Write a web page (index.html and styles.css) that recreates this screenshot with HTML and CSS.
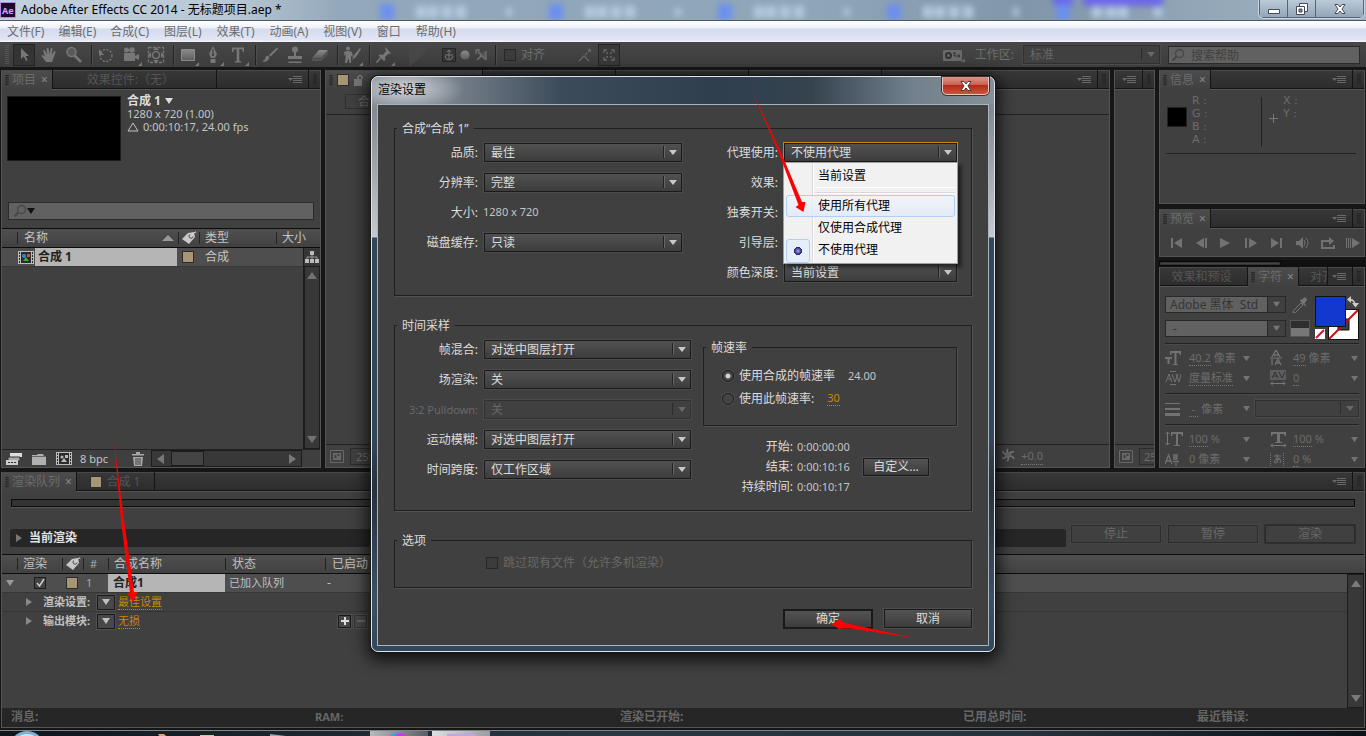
FILE: index.html
```html
<!DOCTYPE html>
<html lang="zh-CN">
<head>
<meta charset="utf-8">
<title>Adobe After Effects CC 2014 - 无标题项目.aep *</title>
<link rel="stylesheet" href="styles.css">
</head>
<body>
<svg class="defs" aria-hidden="true">
  <defs>
    <linearGradient id="metal" x1="0" y1="0" x2="0" y2="1"><stop offset="0" stop-color="#8c8c8c"/><stop offset="1" stop-color="#5c5c5c"/></linearGradient>
    <symbol id="flyout" viewBox="0 0 14 10"><path d="M0 3h5L2.500 6z" fill="#686868"/><path d="M5 1.500h9M5 3.500h9M5 5.500h9M5 7.500h9" stroke="#686868"/></symbol>
    <symbol id="grip" viewBox="0 0 4 12"><path d="M0 .5h4M0 2.500h4M0 4.500h4M0 6.500h4M0 8.500h4M0 10.500h4" stroke="#222"/></symbol>
    <symbol id="tag" viewBox="0 0 16 14"><path d="M1 8L7 2l6-1 1 5-6 7z" fill="#c8c8c8"/><path d="M9 3.500a2 2 0 1 0 3 2" fill="none" stroke="#444"/><path d="M11 4l3-3.200 1.300.8" fill="none" stroke="#ddd"/></symbol>
    <symbol id="film" viewBox="0 0 16 13"><path d="M0 0h16v13H0z" fill="#bdbdbd"/><path d="M3 1h10v11H3z" fill="#2b2b2b"/><path d="M1 1h1v2H1zm0 3h1v2H1zm0 3h1v2H1zm0 3h1v2H1zM14 1h1v2h-1zm0 3h1v2h-1zm0 3h1v2h-1zm0 3h1v2h-1z" fill="#2b2b2b"/></symbol>
    <symbol id="lens" viewBox="0 0 14 14"><circle cx="8.500" cy="5.500" r="4" fill="none" stroke="#474747" stroke-width="1.300"/><path d="M5.500 8.500L1.500 12.500" stroke="#474747" stroke-width="2"/></symbol>
    <symbol id="region" viewBox="0 0 14 13"><path d="M.5.500h13v12H.5z" fill="none" stroke="#686868"/><path d="M3 3h8v7H3z" fill="#686868"/><path d="M4.500 5h2v3h-2zm3-1h2v2h-2z" fill="#404040"/></symbol>
    <symbol id="down" viewBox="0 0 8 6"><path d="M0 0h8L4 6z" fill="currentColor"/></symbol>
  </defs>
</svg>

<header class="titlebar">
  <svg class="ae" viewBox="0 0 16 16"><rect x=".5" y=".5" width="15" height="15" fill="#1d0a33" stroke="#b48ae0"/><text x="2" y="12" font-size="9" fill="#cf9dff">Ae</text></svg>
  <h1>Adobe After Effects CC 2014 - 无标题项目.aep *</h1>
  <div class="behind"><i></i><i></i><i></i><i></i><i class="last"></i></div>
  <div class="winbtns">
    <button aria-label="最小化"><svg width="12" height="12"><path d="M.5 6.500h11v4H.5z" fill="#fff" stroke="#444a58"/></svg></button>
    <button aria-label="还原"><svg width="12" height="12"><path d="M3.500.500h8v8h-8z" fill="#fff" stroke="#444a58"/><path d="M.5 3.500h8v8h-8z" fill="#fff" stroke="#444a58"/><path d="M3 6h3v3H3z" fill="#7888a0" stroke="#444a58"/></svg></button>
    <button class="wide" aria-label="关闭"><svg width="12" height="12"><path d="M1 1.500h3l2 2.500 2-2.500h3L8 6l3 4.500H8L6 8l-2 2.500H1L4 6z" fill="#fff" stroke="#444a58"/></svg></button>
  </div>
</header>

<nav class="menubar">
  <a href="#">文件(F)</a><a href="#">编辑(E)</a><a href="#">合成(C)</a><a href="#">图层(L)</a><a href="#">效果(T)</a><a href="#">动画(A)</a><a href="#">视图(V)</a><a href="#">窗口</a><a href="#">帮助(H)</a>
</nav>

<div class="toolbar">
  <svg class="grip" width="4" height="20"><path d="M2 0v20" stroke="#555" stroke-width="4" stroke-dasharray="1 1"/></svg>
  <button class="tool on" aria-label="选取"><svg viewBox="0 0 18 18"><path d="M6 2v11l2.800-2.500L11 15l1.700-.8L10.600 10H14z"/></svg></button>
  <button class="tool" aria-label="手形"><svg viewBox="0 0 18 18"><path d="M6 16L1.500 10q0-1.500 1.700-.8L5 11 3.200 4.500q.4-1.400 1.600-.5L6.800 8.500 6.600 2.500q1-1.400 2 0L9.400 8l1.300-5.500q1.200-1 1.900.3L11.900 9l2.300-4q1.400-.4 1.400.8L13.500 12l-1.500 4z"/></svg></button>
  <button class="tool" aria-label="缩放"><svg viewBox="0 0 18 18"><circle cx="6.500" cy="6" r="4.500" fill="#5a5a5a" stroke="#777" stroke-width="1.500"/><path d="M9.500 9.500L16 16" stroke="#777" stroke-width="2.500"/></svg></button>
  <i class="sep"></i>
  <button class="tool" aria-label="旋转"><svg viewBox="0 0 18 18"><circle cx="9" cy="9.500" r="6" fill="none" stroke="#777" stroke-width="1.300" stroke-dasharray="2 1.500"/><path d="M2 3v6h5z"/></svg></button>
  <button class="tool more" aria-label="摄像机"><svg viewBox="0 0 18 18"><circle cx="4.500" cy="4" r="2.500"/><circle cx="10" cy="4" r="2.800"/><path d="M2 7h11v8H2zM13 10l4-2v6l-4-2z"/></svg></button>
  <button class="tool" aria-label="向后平移"><svg viewBox="0 0 18 18"><path d="M1.500 1.500h15v15h-15z" fill="none" stroke="#777" stroke-width="1.300" stroke-dasharray="3 1.500"/><circle cx="9" cy="9" r="3.500" fill="none" stroke="#777" stroke-width="1.500"/><path d="M9 1l3 3H6zM9 17l3-3H6zM1 9l3-3v6zM17 9l-3-3v6z"/></svg></button>
  <i class="sep"></i>
  <button class="tool more" aria-label="矩形"><svg viewBox="0 0 18 18"><path d="M2.500 3.500h13v11h-13z" fill="url(#metal)" stroke="#8a8a8a"/></svg></button>
  <button class="tool more" aria-label="钢笔"><svg viewBox="0 0 18 18"><path d="M9 0L5 8l2 4h4l2-4zM6.500 13h5v4h-5z"/><path d="M9 3v6" stroke="#333"/><circle cx="9" cy="9" r="1" fill="#333"/></svg></button>
  <button class="tool more" aria-label="文字"><svg viewBox="0 0 18 18"><path d="M3 1.500h12V6h-1.200L13 3.200H10.300V15l2 .5v1H5.700v-1l2-.5V3.200H5L4.200 6H3z"/></svg></button>
  <i class="sep"></i>
  <button class="tool" aria-label="画笔"><svg viewBox="0 0 18 18"><path d="M16 1.500L8 9l1.500 1.500L17 3z"/><path d="M7 9.500q-3 .5-3 4l-3 2q6 1 7.500-4z"/></svg></button>
  <button class="tool" aria-label="仿制图章"><svg viewBox="0 0 18 18"><circle cx="9" cy="3.500" r="3"/><path d="M8 6h2v4h6v3H2v-3h6z"/><path d="M2.500 15.500h13v1.500h-13z"/></svg></button>
  <button class="tool" aria-label="橡皮擦"><svg viewBox="0 0 18 18"><path d="M8 4h9l-7 8H1z" fill="url(#metal)"/><path d="M1 12.500h9l7-8V8l-7 7H1z" fill="#555"/></svg></button>
  <i class="sep"></i>
  <button class="tool more" aria-label="Roto 笔刷"><svg viewBox="0 0 18 18"><circle cx="5" cy="2.500" r="2"/><path d="M1 6q4-2 8 0l1 5-2-1v7H6.500l-1-5-1.500 5H2l1-9-1.500 2z"/><path d="M17 2l-6 7-2 5 4-3 5-8z"/></svg></button>
  <i class="sep"></i>
  <button class="tool more" aria-label="操控点"><svg viewBox="0 0 18 18"><path d="M10 1l6 6-1.500 1-1-.3L10 11l.3 3L9 15 3.500 9.500 5 8.500l3 .3L11 5l-.8-2.500z"/><path d="M6 11.500L1.500 16.500" stroke="#777" stroke-width="1.500"/></svg></button>
  <svg class="slope" viewBox="0 0 38 25" preserveAspectRatio="none"><path d="M0 25Q10 18 18 8 24 0 34 0H0z" fill="#474747"/></svg>
  <div class="axis">
    <svg width="14" height="14"><path d="M.5.500h13v13H.5z" fill="#363636" stroke="#252525"/><path d="M7 2v9M3 8q1 4 4 4t4-4M5 4l2-2 2 2M3 7h8" fill="none" stroke="#777"/></svg>
    <svg width="12" height="14"><circle cx="6" cy="7" r="4.500" fill="url(#metal)"/></svg>
    <svg width="14" height="14"><path d="M2 2h3l3 3 4-2v9l-4-3-5 3 3-5z" fill="#555"/><path d="M2 6V2h4M12 12L4 4M12 3v9M3 12l4-4" fill="none" stroke="#707070" stroke-width="1.300"/></svg>
  </div>
  <i class="sep"></i>
  <label class="snap"><input type="checkbox" disabled>对齐</label>
  <svg class="snapico" width="14" height="14"><path d="M1 13l5-5 5 5M7 7l2-2M10 4l1-1" fill="none" stroke="#666" stroke-width="1.300"/><path d="M9 1h4v4z" fill="#666"/></svg>
  <button class="tool boxed" aria-label="捕捉"><svg viewBox="0 0 18 18"><path d="M4 7V4h3M11 4h3v3M14 11v3h-3M7 14H4v-3M7 8V7h1M10 7h1v1M11 10v1h-1M8 11H7v-1" fill="none" stroke="#686868" stroke-width="1.300"/></svg></button>
  <div class="wsp">
    <svg width="22" height="14"><rect y="2" width="19" height="11" rx="1" fill="#6a6a6a"/><circle cx="5.500" cy="7.500" r="2.500" fill="none" stroke="#333" stroke-width="2"/><path d="M11 4v4h6M13 6l-2-2M15 6l2 2-2 2" fill="none" stroke="#333"/><path d="M22 10v4h-4z" fill="#666"/></svg>
    <label for="workspace">工作区:</label>
    <select id="workspace" class="dd off" disabled><option>标准</option></select>
    <div class="help"><svg width="14" height="14"><use href="#lens"/></svg><input type="text" aria-label="搜索帮助" placeholder="搜索帮助"></div>
  </div>
</div>

<main class="workspace">
  <section class="panel project">
    <div class="tabs">
      <div class="tab on"><svg class="grip"><use href="#grip"/></svg>项目<b>×</b></div>
      <div class="tab fx">效果控件:（无）</div>
      <div class="fill"><svg width="14" height="10"><use href="#flyout"/></svg></div>
      <div class="end"><svg class="grip"><use href="#grip"/></svg></div>
    </div>
    <div class="clip">
      <div class="thumb"></div>
      <div><strong>合成 1 <svg width="8" height="6"><use href="#down"/></svg></strong><p>1280 x 720 (1.00)</p><p><svg width="12" height="10"><path d="M6 1L1 9h10z" fill="none" stroke="#c4c4c4"/></svg> 0:00:10:17, 24.00 fps</p></div>
    </div>
    <div class="search"><svg width="14" height="14"><use href="#lens"/></svg><svg class="blk" width="8" height="6"><use href="#down"/></svg><input type="text" aria-label="搜索项目"></div>
    <div class="phead">
      <span class="c1"></span><span class="c2">名称<svg width="12" height="6"><path d="M0 6l6-6 6 6z" fill="#999"/></svg></span><span class="c3"><svg width="16" height="14"><use href="#tag"/></svg></span><span class="c4">类型</span><span class="c5">大小</span>
    </div>
    <div class="plist">
      <div class="rows">
        <div class="prow"><span class="c1"><svg width="16" height="13"><use href="#film"/><circle cx="6" cy="5" r="2" fill="#2a8fd0"/><path d="M9 3h3v3H9z" fill="#d4502a"/><path d="M5 10l3-4 3 4z" fill="#3cae3c"/></svg></span><span class="c2 pick">合成 1</span><span class="c3"><i class="sw"></i></span><span class="c4">合成</span></div>
      </div>
      <div class="pscroll">
        <svg class="flow" width="14" height="14"><path d="M5 1h4v4H5zM0 9h4v4H0zM5 9h4v4H5zM10 9h4v4h-4z" fill="#bbb"/><path d="M7 5v4M2 9V7h10v2" fill="none" stroke="#999"/></svg>
        <div class="vbar"><svg width="10" height="7"><path d="M0 7l5-7 5 7z" fill="#727272"/></svg><svg width="10" height="7"><path d="M0 0h10L5 7z" fill="#727272"/></svg></div>
      </div>
    </div>
    <div class="pfoot">
      <svg width="16" height="14"><path d="M4 1h12v4H4z" fill="#ddd"/><path d="M2 5h12v4H2z" fill="#aaa" stroke="#333"/><path d="M0 8h12v5H0z" fill="#ccc"/><path d="M2 10.500h2M5 10.500h2M8 10.500h2" stroke="#333"/></svg>
      <svg width="14" height="14"><path d="M0 3h5l1-1h5l1 2h2v9H0z" fill="#b0b0b0"/><path d="M0 4.500h14" stroke="#666"/></svg>
      <svg width="16" height="13"><use href="#film"/><circle cx="6" cy="5" r="1.500" fill="#bbb"/><path d="M9 3h3v3H9zM5 10l3-4 3 4z" fill="#bbb"/></svg>
      <span>8 bpc</span>
      <svg width="12" height="14"><path d="M0 2h12v1.500H0zM4 0h4v2H4zM1 5h10l-1 9H2z" fill="#a8a8a8"/><path d="M4 6v7M6 6v7M8 6v7" stroke="#444"/></svg>
      <div class="hbar"><svg width="7" height="10"><path d="M7 0v10L0 5z" fill="#777"/></svg><i></i><svg width="7" height="10"><path d="M0 0v10l7-5z" fill="#777"/></svg></div>
    </div>
  </section>

  <section class="panel comp">
    <div class="tabs">
      <div class="tab on lead"><svg class="grip"><use href="#grip"/></svg><i class="sw"></i><svg width="10" height="12"><path d="M1 5h8v7H1z" fill="#777"/><path d="M5 5V3q2-3 4 0v2" fill="none" stroke="#777" stroke-width="1.500"/></svg></div>
      <div class="tab"></div><div class="tab"></div><div class="tab"></div>
      <div class="fill"><svg width="14" height="10"><use href="#flyout"/></svg></div>
      <div class="end"><svg class="grip"><use href="#grip"/></svg></div>
    </div>
    <div class="crumb"><button>合成 1</button></div>
    <div class="stage"></div>
    <div class="vfoot"><svg width="14" height="13"><use href="#region"/></svg><span class="zoom">25%</span><span class="expo"><svg width="14" height="14"><circle cx="7" cy="7" r="3" fill="#666"/><path d="M7 1q-2 2 0 4M13 4q-3-1-4 2M13 11q-1-3-4-3M6 13q2-1 1-4M1 10q3 1 4-2M2 3q0 3 3 3" fill="none" stroke="#777" stroke-width="1.500"/></svg><u>+0.0</u></span></div>
  </section>

  <section class="panel side">
    <div class="tabs"><div class="fill"><svg width="14" height="10"><use href="#flyout"/></svg></div><div class="end"><svg class="grip"><use href="#grip"/></svg></div></div>
    <div class="stage"></div>
    <div class="vfoot"><svg width="14" height="13"><use href="#region"/></svg><span class="zoom">25</span></div>
  </section>

  <div class="right">
    <section class="panel info">
      <div class="tabs">
        <div class="tab on"><svg class="grip"><use href="#grip"/></svg>信息<b>×</b></div>
        <div class="fill"><svg width="14" height="10"><use href="#flyout"/></svg></div>
        <div class="end"><svg class="grip"><use href="#grip"/></svg></div>
      </div>
      <div class="ibody">
        <i class="blackbox"></i>
        <dl><dt>R :</dt><dt>G :</dt><dt>B :</dt><dt>A :</dt></dl>
        <i class="vline"></i><svg width="9" height="9"><path d="M4.500 0v9M0 4.500h9" stroke="#777"/></svg>
        <dl><dt>X :</dt><dt>Y :</dt></dl>
      </div>
    </section>
    <section class="panel preview">
      <div class="tabs">
        <div class="tab on"><svg class="grip"><use href="#grip"/></svg>预览<b>×</b></div>
        <div class="fill"><svg width="14" height="10"><use href="#flyout"/></svg></div>
        <div class="end"><svg class="grip"><use href="#grip"/></svg></div>
      </div>
      <div class="play">
        <button aria-label="第一帧"><svg width="14" height="12"><path d="M1 1h2v10H1zM12 1v10L4 6z"/></svg></button>
        <button aria-label="上一帧"><svg width="14" height="12"><path d="M9 1v10L1 6zM10 1h2v10h-2z"/></svg></button>
        <button aria-label="播放"><svg width="14" height="12"><path d="M0 1v10l10-5z"/></svg></button>
        <button aria-label="下一帧"><svg width="14" height="12"><path d="M0 1h2v10H0zM4 1v10l8-5z"/></svg></button>
        <button aria-label="最后一帧"><svg width="14" height="12"><path d="M0 1v10l8-5zM9 1h2v10H9z"/></svg></button>
        <button aria-label="静音"><svg width="14" height="12"><path d="M0 4h3l4-4v12L3 8H0z"/><path d="M8 3q2 3 0 6M10 1q4 5 0 10" fill="none" stroke="#727272"/></svg></button>
        <button aria-label="循环"><svg width="14" height="12"><path d="M0 3h8V0l5 4-5 4V5H2v5h10V8h2v4H0z"/></svg></button>
        <button aria-label="RAM 预览"><svg width="14" height="12"><path d="M0 1h1v10H0zM2 1h1v10H2zM4 1h1v10H4zM6 1v10l8-5z"/></svg></button>
      </div>
    </section>
    <div class="strip"><i></i></div>
    <section class="panel chars">
      <div class="tabs">
        <div class="tab">效果和预设</div>
        <div class="tab on"><svg class="grip"><use href="#grip"/></svg>字符<b>×</b></div>
        <div class="tab cut">对齐</div>
        <div class="fill"><svg width="14" height="10"><use href="#flyout"/></svg></div>
        <div class="end"><svg class="grip"><use href="#grip"/></svg></div>
      </div>
      <div class="cbody">
        <div class="fontrow">
          <div class="fonts">
            <select class="font" aria-label="字体"><option>Adobe 黑体&nbsp; Std</option></select>
            <select class="font" aria-label="字体样式"><option>&nbsp;-</option></select>
          </div>
          <div class="picks">
            <svg width="16" height="18"><path d="M1 17q0-3 2-4l6-6 2 2-6 6q-1 2-4 2z" fill="none" stroke="#777"/><path d="M8 5l5 5 1-1-1.500-1.500L15 4q0-3-3-2.500L10 4 9 3z" fill="#777"/></svg>
            <i class="bw"></i>
          </div>
          <svg class="paint" width="44" height="44"><path d="M13 13h31v31H13z" fill="#111"/><path d="M14 14h29v29H14z" fill="#fff"/><path d="M23 23h11v11H23z" fill="#404040" stroke="#111"/><path d="M14 43L43 14" stroke="#c80e0e" stroke-width="2"/><path d="M0 0h31v31H0z" fill="#111"/><path d="M1 1h29v29H1z" fill="#1238d0"/><path d="M0 33h10v10H0z" fill="#fff"/><path d="M1 42l8-8" stroke="#d01030" stroke-width="2"/><path d="M34 4q6-1 6 6" fill="none" stroke="#ccc" stroke-width="1.500"/><path d="M36 0v7l-4-3.500zM37 7h7l-3.500 4.500z" fill="#ccc"/></svg>
        </div>
        <hr>
        <div class="crow">
          <svg width="16" height="16"><path d="M5 1h11v4h-1l-1-2h-2.500v11h1.500v1h-5v-1h1.500V3H7L6 5H5zM0 7h7v2H4.500v5H2.500V9H0z"/></svg><span><u>40.2</u> 像素</span><svg class="arr" width="7" height="7"><use href="#down"/></svg>
          <svg width="12" height="16"><path d="M2 7l4-7 4 7M4 5h4M2 9v6M5 15l3-6 3 6M6 13h4" fill="none" stroke="#727272" stroke-width="1.300"/><path d="M0 8h12" stroke="#727272"/></svg><span><u>49</u> 像素</span><svg class="arr" width="7" height="7"><use href="#down"/></svg>
        </div>
        <div class="crow">
          <svg width="16" height="16"><path d="M1 12l3-8 3 8M3 9h3M7 4l3 8 3-8M11 4l3 8 2-8M5 1.500h6M5 14.500h6" fill="none" stroke="#727272"/></svg><span><u>度量标准</u></span><svg class="arr" width="7" height="7"><use href="#down"/></svg>
          <svg width="16" height="16"><path d="M0 0h16v10H0z" fill="#5c5c5c"/><path d="M2 8l3-6 3 6M3 6h4M9 2l3 6 3-6" fill="none" stroke="#333"/><path d="M1 13.500h14M3 11.500l-2 2 2 2M13 11.500l2 2-2 2" fill="none" stroke="#777"/></svg><span><u>0</u></span><svg class="arr" width="7" height="7"><use href="#down"/></svg>
        </div>
        <hr>
        <div class="crow tall">
          <svg width="15" height="14"><path d="M0 1h15v1H0zM0 6h15v2H0zM0 11h15v3H0z"/></svg><span><u>&nbsp;-&nbsp;</u> 像素</span><svg class="arr" width="7" height="7"><use href="#down"/></svg>
          <select class="dd off" aria-label="描边方式" disabled><option></option></select>
        </div>
        <hr>
        <div class="crow">
          <svg width="18" height="16"><path d="M6 1h12v4h-1l-1-2h-3v11h2v1H9v-1h2V3H8L7 5H6z"/><path d="M2.500 1v13M.5 3l2-2 2 2M.5 12l2 2 2-2" fill="none" stroke="#777"/></svg><span><u>100</u> %</span><svg class="arr" width="7" height="7"><use href="#down"/></svg>
          <svg width="18" height="17"><path d="M1 1h15v4h-1l-1-2h-4v8h2v1H5v-1h2V3H3L2 5H1z"/><path d="M1 14.500h15M3 12.500l-2 2 2 2M14 12.500l2 2-2 2" fill="none" stroke="#777"/></svg><span><u>100</u> %</span><svg class="arr" width="7" height="7"><use href="#down"/></svg>
        </div>
        <div class="crow">
          <svg width="15" height="16"><path d="M0 13l3.500-9 3.500 9M1.500 10h4M8 4h4v4H9V6h3M8 10.500h6M11 12v3" fill="none" stroke="#727272" stroke-width="1.300"/></svg><span>0 像素</span><svg class="arr" width="7" height="7"><use href="#down"/></svg>
          <svg width="14" height="16"><path d="M.5 2v13M13.500 2v13" stroke="#727272" stroke-dasharray="1 1"/><path d="M4 5h7M7 3v9M10 7q-5 0-6 4 2 3 5-3 3 0 1 4" fill="none" stroke="#727272"/></svg><span><u>0</u> %</span><svg class="arr" width="7" height="7"><use href="#down"/></svg>
        </div>
      </div>
    </section>
  </div>
</main>

<section class="panel queue">
  <div class="tabs">
    <div class="tab on"><svg class="grip"><use href="#grip"/></svg>渲染队列<b>×</b></div>
    <div class="tab"><i class="sw"></i>合成 1</div>
    <div class="fill"><svg width="14" height="10"><use href="#flyout"/></svg></div>
    <div class="end"><svg class="grip"><use href="#grip"/></svg></div>
  </div>
  <div class="progress"></div>
  <div class="current">
    <div class="curbar"><svg width="6" height="8"><path d="M0 0v8l6-4z" fill="#777"/></svg>当前渲染</div>
    <button disabled>停止</button><button disabled>暂停</button><button class="dflt" disabled>渲染</button>
  </div>
  <div class="qhead"><span class="q0"></span><span class="q1">渲染</span><span class="q2"><svg width="16" height="14"><use href="#tag"/></svg></span><span class="q3">#</span><span class="q4">合成名称</span><span class="q5">状态</span><span class="q6">已启动</span></div>
  <div class="qwrap">
    <div class="qrows">
      <div class="qrow"><span class="q0"><svg width="8" height="6"><use href="#down"/></svg></span><span class="q1"><input type="checkbox" aria-label="渲染合成1" checked></span><span class="q2"><i class="sw"></i></span><span class="q3">1</span><span class="q4 pick">合成1</span><span class="q5">已加入队列</span><span class="q6">-</span></div>
      <div class="qsub"><svg width="6" height="8"><path d="M0 0v8l6-4z" fill="#888"/></svg><strong>渲染设置:</strong><button aria-label="渲染设置模板"><svg width="8" height="6"><use href="#down"/></svg></button><a href="#">最佳设置</a></div>
      <div class="qsub"><svg width="6" height="8"><path d="M0 0v8l6-4z" fill="#888"/></svg><strong>输出模块:</strong><button aria-label="输出模块模板"><svg width="8" height="6"><use href="#down"/></svg></button><a href="#">无损</a><span class="pm"><button aria-label="添加"><svg width="8" height="8"><path d="M4 0v8M0 4h8" stroke="#ddd" stroke-width="2"/></svg></button><button aria-label="移除" disabled><svg width="8" height="8"><path d="M0 4h8" stroke="#666" stroke-width="2"/></svg></button></span></div>
    </div>
    <div class="vbar"><svg width="10" height="7"><path d="M0 7l5-7 5 7z" fill="#7a7a7a"/></svg><svg width="10" height="7"><path d="M0 0h10L5 7z" fill="#7a7a7a"/></svg></div>
  </div>
  <footer class="msgs"><span>消息:</span><span>RAM:</span><span>渲染已开始:</span><span>已用总时间:</span><span>最近错误:</span></footer>
</section>

<div class="taskbar">
  <svg class="orb" width="30" height="6"><ellipse cx="15" cy="12" rx="15" ry="12" fill="#7fb0d0"/><ellipse cx="15" cy="12" rx="12" ry="9" fill="#cfe6f2"/></svg>
  <svg class="bits" width="140" height="6"><path d="M0 3h6l3 3H2z" fill="#e0a070"/><path d="M42 4h14v2H42z" fill="#d8c890"/><path d="M112 3l16 2v1h-16z" fill="#9aa"/></svg>
  <i class="task"><svg width="22" height="6"><circle cx="8" cy="9" r="7" fill="#3f9cf0"/><circle cx="13" cy="9" r="7" fill="#c63cf0"/></svg></i>
  <i class="task act"><svg width="28" height="6"><path d="M0 3h28v3H0z" fill="#c9a0f0"/><path d="M2 5h24v1H2z" fill="#2a1040"/></svg></i>
</div>

<div class="dialog" role="dialog" aria-labelledby="dlgTitle">
  <div class="dtitle"><h2 id="dlgTitle">渲染设置</h2><button aria-label="关闭"><svg width="12" height="12"><path d="M1 1.500h3l2 2.500 2-2.500h3L8 6l3 4.500H8L6 8l-2 2.500H1L4 6z" fill="#fff" stroke="#53343a"/></svg></button></div>
  <form class="dbody">
    <fieldset class="f1">
      <legend>合成“合成 1”</legend>
      <div class="form left">
        <label for="quality">品质:</label><select id="quality" class="dd"><option>最佳</option></select>
        <label for="res">分辨率:</label><select id="res" class="dd"><option>完整</option></select>
        <span class="lab">大小:</span><span class="num">1280 x 720</span>
        <label for="cache">磁盘缓存:</label><select id="cache" class="dd"><option>只读</option></select>
      </div>
      <div class="form rightcol">
        <label for="proxy">代理使用:</label>
        <div class="open"><select id="proxy" class="dd focus"><option>不使用代理</option></select>
          <ul class="menu"><li>当前设置</li><li class="line"></li><li class="hover">使用所有代理</li><li>仅使用合成代理</li><li class="sel">不使用代理</li></ul>
        </div>
        <span class="lab">效果:</span><span></span>
        <span class="lab">独奏开关:</span><span></span>
        <span class="lab">引导层:</span><span></span>
        <label for="depth">颜色深度:</label><select id="depth" class="dd"><option>当前设置</option></select>
      </div>
    </fieldset>
    <fieldset class="f2">
      <legend>时间采样</legend>
      <div class="form left wide">
        <label for="blend">帧混合:</label><select id="blend" class="dd"><option>对选中图层打开</option></select>
        <label for="field">场渲染:</label><select id="field" class="dd"><option>关</option></select>
        <label for="pull" class="dim">3:2 Pulldown:</label><select id="pull" class="dd off" disabled><option>关</option></select>
        <label for="blur">运动模糊:</label><select id="blur" class="dd"><option>对选中图层打开</option></select>
        <label for="span">时间跨度:</label><select id="span" class="dd"><option>仅工作区域</option></select>
      </div>
      <div class="time">
        <fieldset class="rate">
          <legend>帧速率</legend>
          <label><input type="radio" name="rate" checked>使用合成的帧速率<span class="num">24.00</span></label>
          <label><input type="radio" name="rate">使用此帧速率:<a class="num" href="#">30</a></label>
        </fieldset>
        <div class="range">
          <div class="times"><span>开始:</span><span class="num">0:00:00:00</span><span>结束:</span><span class="num">0:00:10:16</span><span>持续时间:</span><span class="num">0:00:10:17</span></div>
          <button type="button">自定义...</button>
        </div>
      </div>
    </fieldset>
    <fieldset class="f3">
      <legend>选项</legend>
      <label><input type="checkbox" disabled>跳过现有文件（允许多机渲染）</label>
    </fieldset>
    <div class="actions"><button type="button" class="ok">确定</button><button type="button">取消</button></div>
  </form>
</div>

<svg class="marks" width="1366" height="736" aria-hidden="true">
  <g fill="#f00"><path d="M114 440L124 520 134 592h3.500L133 602 127 593l3-.5L121 520z"/><path d="M752 91l28 59 22 52h3.500L803.500 212 795.500 207l3-2L778 151z"/><path d="M914 638l-34-5-29-4.500h-10.500V630L831.500 624l9.500-5v2.500l11 3L882 631z"/></g>
</svg>
</body>
</html>
```
FILE: styles.css
```css
* { box-sizing: border-box; }
html, body { height: 100%; }
body {
  margin: 0;
  display: flex;
  flex-direction: column;
  position: relative;
  overflow: hidden;
  background: #161616;
  color: #c8c8c8;
  font: 12px/16px "Noto Sans", "Noto Sans CJK SC", sans-serif;
}
h1, h2, p, dl, ul { margin: 0; padding: 0; font-size: 12px; font-weight: 400; }
button, input, select { font: inherit; color: inherit; margin: 0; padding: 0; border: 0; background: none; border-radius: 0; }
button { display: flex; align-items: center; justify-content: center; }
svg { display: block; flex: none; }
a { color: inherit; text-decoration: none; }
.defs { position: absolute; width: 0; height: 0; }
.num { font-size: 11px; }
.sw { width: 12px; height: 12px; background: #a89574; border: 1px solid #2c2c2c; flex: none; }

/* window title and menu */
.titlebar {
  position: relative;
  display: flex;
  align-items: center;
  gap: 5px;
  height: 21px;
  flex: none;
  overflow: hidden;
  border-bottom: 1px solid #4d5864;
  background: linear-gradient(90deg, #c3d0dd 0, #b9c8d6 230px, #93a8ba 340px, #8fa6b9 60%, #8196a9 75%, #a3b5c4 100%);
  color: #000;
}
.ae { width: 16px; height: 16px; font-weight: 700; }
.titlebar h1 { white-space: nowrap; width: 324px; }
.behind { display: flex; flex: 1; gap: 155px; padding: 4px 0 0 30px; filter: blur(3px); }
.behind i { flex: none; width: 14px; height: 16px; background: #6b8ff0; box-shadow: 34px 0 0 -2px #b4cbe0, 46px 0 0 -2px #b4cbe0, 60px 0 0 -2px #b4cbe0, 74px 0 0 -2px #b4cbe0, 122px 0 0 -4px #b4cbe0; }
.behind .last { box-shadow: 0 -17px 0 3px #6c66e8, 30px -17px 0 3px #6c66e8, 50px -17px 0 3px #6c66e8, 70px -17px 0 3px #6c66e8, 90px -17px 0 3px #6c66e8, 34px 0 0 -2px #b4cbe0, 48px 0 0 -2px #b4cbe0, 60px 0 0 -2px #b4cbe0, 95px 0 0 -3px #b4cbe0; }
.winbtns { position: absolute; right: 2px; top: -1px; display: flex; border: 1px solid #56657a; border-radius: 0 0 5px 5px; box-shadow: 0 0 0 1px #c8d5e2; }
.winbtns button { width: 28px; height: 17px; background: linear-gradient(#bccad8, #93a6b9); border-right: 1px solid #56657a; }
.winbtns .wide { width: 47px; border-right: 0; }
.menubar {
  display: flex;
  align-items: center;
  gap: 14px;
  padding: 0 7px;
  height: 21px;
  flex: none;
  background: linear-gradient(#fff 0, #eef1f8 7px, #d4dbee 8px, #e1e6f6 19px, #f4f4f4 20px);
  color: #6d6d6d;
}
.menubar a:nth-child(n+4) { margin-left: 1px; }

/* tool strip */
.toolbar { display: flex; align-items: center; height: 25px; flex: none; padding-left: 5px; background: linear-gradient(#474747, #3c3c3c); color: #6e6e6e; }
.toolbar > .grip { margin-right: 4px; }
.tool { position: relative; width: 22px; height: 22px; margin-right: 3px; flex: none; }
.tool svg { width: 18px; height: 18px; fill: #777; }
.tool.on, .tool.boxed { background: #343434; border: 1px solid #242424; }
.tool.boxed { background: #383838; }
.more::after { content: ""; position: absolute; right: 0; bottom: 0; border: 2px solid; border-color: transparent #777 #777 transparent; }
.sep { width: 2px; height: 20px; margin: 0 2px 0 3px; background: #222; border-right: 1px solid #4e4e4e; flex: none; }
.slope { width: 38px; height: 25px; margin-left: 11px; }
.axis { display: flex; gap: 3px; align-items: center; margin: 0 4px 0 -5px; }
.snap { display: flex; align-items: center; gap: 5px; margin-left: 5px; }
input[type=checkbox] { appearance: none; width: 12px; height: 12px; border: 1px solid #272727; background: #3c3c3c; }
.snapico { margin: 0 6px 0 33px; }
.wsp { display: flex; align-items: center; flex: 1; justify-content: flex-end; padding-right: 6px; }
.wsp label { margin: 0 9px 0 10px; }
.wsp .dd { width: 137px; margin-right: 8px; }
.help { display: flex; align-items: center; width: 192px; height: 18px; padding-left: 2px; background: #616161; border: 1px solid #2a2a2a; }
.help input { flex: 1; min-width: 0; padding: 2px 0 0 6px; }
.help input::placeholder { color: #404040; opacity: 1; }

.dd {
  appearance: none;
  height: 19px;
  padding: 1px 0 0 6px;
  border: 1px solid #1a1a1a;
  box-shadow: 0 0 0 1px #4b4b4b;
  color: #dcdcdc;
  line-height: 16px;
  background:
    url("data:image/svg+xml,%3Csvg xmlns='http://www.w3.org/2000/svg' width='16' height='17'%3E%3Cpath d='M.5 2v12' stroke='%23222'/%3E%3Cpath d='M1.500 2v12' stroke='%23666'/%3E%3Cpath d='M6 6h8l-4 5z' fill='%23c8c8c8'/%3E%3C/svg%3E") right 2px center no-repeat,
    linear-gradient(#515151, #3d3d3d);
}
.dd.off {
  opacity: 1;
  color: #686868;
  border-color: #303030;
  background:
    url("data:image/svg+xml,%3Csvg xmlns='http://www.w3.org/2000/svg' width='16' height='17'%3E%3Cpath d='M.5 2v12' stroke='%232c2c2c'/%3E%3Cpath d='M6 6h8l-4 5z' fill='%23686868'/%3E%3C/svg%3E") right 2px center no-repeat,
    #404040;
}

/* panels */
.workspace { display: flex; gap: 4px; height: 398px; flex: none; margin-top: 3px; padding: 0 1px; }
.panel { display: flex; flex-direction: column; overflow: hidden; background: #404040; border: solid #555; border-width: 0 1px 1px; }
.tabs { display: flex; height: 20px; flex: none; color: #555; background: #141414; border-bottom: 1px solid #555; }
.tab, .fill, .end { display: flex; align-items: center; justify-content: center; margin: 0 1px 1px 0; background: linear-gradient(#373737, #2d2d2d); border-top: 1px solid #4a4a4a; white-space: nowrap; }
.tab.on { justify-content: flex-start; margin-bottom: -1px; padding: 0 4px 1px 3px; background: linear-gradient(#4c4c4c, #404040); color: #6c6c6c; }
.tab .grip, .end .grip { width: 4px; height: 11px; }
.tab .grip { margin-right: 3px; }
.tab b { margin-left: 5px; font-weight: 400; line-height: 14px; color: #888; }
.fill { flex: 1; justify-content: flex-end; padding-right: 6px; }
.end { width: 11px; margin-right: 0; }

.project { width: 320px; color: #c4c4c4; }
.fx { width: 163px; padding-right: 8px; }
.clip { display: flex; gap: 6px; height: 112px; padding: 6px 5px; font-size: 11px; line-height: 13px; }
.clip > div:last-child { padding-top: 0; margin-top: -2px; }
.clip strong, .clip p { display: flex; gap: 4px; align-items: center; font-size: 11px; height: 13px; }
.clip strong { font-size: 12px; color: #ddd; }
.thumb { width: 114px; height: 65px; background: #000; border: 1px solid #1c1c1c; }
.search { display: flex; align-items: center; margin: 0 6px 8px 6px; height: 18px; padding-left: 4px; background: #616161; border: 1px solid #2b2b2b; }
.search input { flex: 1; min-width: 0; }
.blk { color: #111; }
.phead, .qhead { display: flex; align-items: center; flex: none; height: 20px; background: linear-gradient(#4f4f4f, #414141); border: solid #0c0c0c; border-width: 1px 0; }
.phead span + span, .qhead span + span { border-left: 1px solid #222; height: 12px; display: flex; align-items: center; }
.c1 { width: 15px; flex: none; }
.c2 { width: 161px; padding-left: 6px; flex: none; }
.c2 svg { margin-left: auto; margin-right: 4px; }
.c3 { width: 21px; padding-left: 2px; flex: none; }
.c4 { width: 77px; padding-left: 5px; flex: none; }
.c5 { padding-left: 5px; }
.plist { display: flex; flex: 1; min-height: 0; }
.rows { flex: 1; }
.prow { display: flex; align-items: center; height: 18px; background: #4e4e4e; box-shadow: 0 1px #383838; }
.prow .c1 { width: 32px; padding-left: 16px; }
.prow .c2 { width: 142px; padding-left: 3px; margin-left: 1px; }
.prow .c3 { padding-left: 5px; width: 23px; }
.pick { background: #b5b5b5; color: #222; font-weight: 700; height: 18px; line-height: 18px; }
.pscroll { display: flex; flex-direction: column; width: 17px; background: #363636; border-left: 1px solid #1c1c1c; }
.flow { margin: 2px 1px; }
.vbar { flex: 1; display: flex; flex-direction: column; justify-content: space-between; align-items: center; padding: 5px 0; border: 1px solid #1c1c1c; background: #383838; }
.pfoot { display: flex; align-items: center; height: 18px; flex: none; padding-left: 4px; gap: 10px; background: #3f3f3f; border-top: 1px solid #222; font-size: 12px; }
.pfoot span { font-size: 11px; margin: 0 14px 0 -2px; }
.hbar { display: flex; align-items: center; justify-content: space-between; width: 151px; height: 17px; margin-left: -3px; padding: 0 5px; border: 1px solid #1c1c1c; background: #383838; }
.hbar i { width: 33px; height: 15px; background: #444; border: 1px solid #1c1c1c; margin-right: 80px; margin-left: 2px; }

.comp { flex: 1; min-width: 0; color: #6c6c6c; }
.comp .tab { width: 132px; }
.comp .lead { width: 156px; gap: 4px; }
.comp .lead .grip { margin: 0; }
.crumb { height: 25px; flex: none; padding: 4px 19px; border-bottom: 1px solid #222; }
.crumb button { width: 60px; height: 15px; border: 1px solid #303030; }
.stage { flex: 1; }
.vfoot { display: flex; align-items: center; gap: 6px; height: 23px; flex: none; padding-left: 4px; border-top: 1px solid #222; color: #6c6c6c; overflow: hidden; font-size: 11px; }
.zoom { width: 60px; height: 17px; flex: none; padding-left: 5px; line-height: 15px; border: 1px solid #2c2c2c; }
.expo { display: flex; gap: 6px; margin-left: auto; padding-right: 66px; }
.side { width: 41px; }
.side .vfoot { padding-left: 4px; }
.side .zoom { padding-left: 4px; }
u { text-decoration: none; border-bottom: 1px dotted #777; }

.right { display: flex; flex-direction: column; width: 206px; color: #6c6c6c; }
.info { height: 134px; margin-bottom: 5px; flex: none; }
.ibody { display: flex; margin: 4px 8px 0 6px; height: 60px; border-bottom: 1px solid #222; font: 11px/13px "DejaVu Sans", sans-serif; }
.blackbox { width: 20px; height: 20px; margin: 13px 5px 0 1px; background: #000; border: 1px solid #222; }
.ibody dl { width: 64px; }
.ibody dt { font-size: 11px; }
.vline { width: 1px; height: 50px; margin: 3px 7px 0 5px; background: #222; }
.ibody svg { margin: 20px 5px 0 0; }
.preview { height: 48px; margin-bottom: 3px; flex: none; }
.play { display: flex; align-items: center; justify-content: space-between; flex: 1; padding: 0 4px 0 10px; fill: #727272; }
.strip { height: 7px; background: #101010; padding: 1px 0; }
.strip i { display: block; width: 122px; height: 5px; background: #454545; border: 1px solid #0a0a0a; outline: 1px solid #333; outline-offset: -2px; }
.chars { flex: 1; min-height: 0; }
.chars .tab:first-child { width: 87px; padding-right: 4px; }
.cut { width: 28px; overflow: hidden; justify-content: flex-start; padding-left: 11px; }
.chars .fill { background: #303030; }
.cbody { padding: 9px 5px 0; }
.fontrow { display: flex; justify-content: space-between; height: 47px; }
.fonts, .picks { display: flex; flex-direction: column; gap: 7px; }
.font { appearance: none; width: 121px; height: 17px; padding-left: 4px; border: 1px solid #282828; color: #363636; line-height: 14px;
  background: url("data:image/svg+xml,%3Csvg xmlns='http://www.w3.org/2000/svg' width='18' height='16'%3E%3Cpath d='M0 0h18v16H0z' fill='%23404040'/%3E%3Cpath d='M.5 0v16' stroke='%23282828'/%3E%3Cpath d='M6 5h7l-3.500 5z' fill='%23777'/%3E%3C/svg%3E") right center no-repeat, #616161; }
.bw { width: 20px; height: 17px; background: linear-gradient(#2e2e2e 50%, #777 50%); border: 1px solid #555; }
.picks { margin: 0 2px 0 0; }
.picks svg { margin-left: 2px; height: 17px; }
.cbody hr { height: 1px; margin: 0 0 4px; border: 0; background: #222; box-shadow: 0 1px #4a4a4a; }
.crow { display: grid; grid-template-columns: 24px 54px 27px 23px 1fr 8px; align-items: center; height: 20px; font-size: 11px; fill: #727272; white-space: nowrap; }
.crow + hr { margin-top: 5px; }
.crow.tall { height: 21px; }
.crow .dd { grid-column: 4 / -1; margin-left: -15px; height: 17px; }
.crow .arr { color: #727272; }

/* render queue */
.queue { flex: 1; min-height: 0; margin: 4px 1px 2px; color: #c0c0c0; }
.queue .tabs .sw { margin-right: 4px; }
.queue .tab:nth-child(2) { width: 77px; }
.progress { height: 8px; flex: none; margin: 7px 9px 0; border: 1px solid #0c0c0c; background: #333; box-shadow: 0 1px #555; }
.current { display: flex; align-items: flex-start; height: 47px; flex: none; padding: 18px 9px 0 8px; gap: 7px; }
.curbar { display: flex; align-items: center; gap: 7px; flex: 1; margin: 4px -2px 0 0; height: 18px; padding-left: 6px; background: #262626; border-radius: 3px 3px 0 0; color: #e2e2e2; font-weight: 700; }
.current button { width: 90px; height: 18px; border: 1px solid #2c2c2c; box-shadow: 0 0 0 1px #454545; color: #686868; }
.current button.dflt { box-shadow: 0 0 0 1px #303030; }
.q0 { width: 15px; flex: none; }
.q1 { width: 45px; padding-left: 5px; flex: none; }
.q2 { width: 21px; padding-left: 2px; flex: none; }
.q3 { width: 25px; padding-left: 6px; flex: none; color: #aaa; font-size: 11px; }
.q4 { width: 117px; padding-left: 5px; flex: none; }
.q5 { width: 100px; padding-left: 6px; flex: none; }
.q6 { padding-left: 6px; }
.qwrap { display: flex; flex: 1; min-height: 0; }
.qwrap .vbar { width: 17px; flex: none; }
.qrows { flex: 1; }
.qrow { display: flex; align-items: center; height: 18px; background: #4e4e4e; }
.qrow .q0 { padding-left: 4px; color: #999; }
.qrow .q1 { padding-left: 17px; display: flex; }
.qrow .q2 { padding-left: 4px; }
.qrow .q2 .sw, .prow .sw { display: block; }
.qrow .q3 { padding-left: 3px; }
.qrow .q5 { font-size: 11px; padding-left: 4px; }
.qrow .q6 { padding-left: 2px; }
.qrow input:checked { background: #444 url("data:image/svg+xml,%3Csvg xmlns='http://www.w3.org/2000/svg' width='10' height='10'%3E%3Cpath d='M2 5l2.500 3L9 1' fill='none' stroke='%23ccc' stroke-width='1.500'/%3E%3C/svg%3E") center no-repeat; border-color: #1c1c1c; }
.qsub { display: flex; align-items: center; height: 19px; padding-left: 24px; border-top: 1px solid #363636; font-size: 11px; }
.qsub strong { width: 54px; margin-left: 11px; white-space: nowrap; }
.qsub button { width: 18px; height: 15px; background: #484848; border: 1px solid #1a1a1a; box-shadow: 0 0 0 1px #505050; margin-right: 3px; }
.qsub a { color: #c48a00; border-bottom: 1px dotted #c48a00; line-height: 14px; }
.pm { display: flex; margin-left: 198px; }
.pm button { width: 13px; height: 13px; margin-right: 3px; }
.pm button:disabled { border-color: #333; }
.msgs { position: relative; display: grid; grid-template-columns: 304px 305px 343px 234px 1fr; height: 19px; flex: none; padding-left: 9px; background: #262626; color: #666; font-weight: 700; font-size: 12px; line-height: 18px; }
.msgs span:nth-child(2) { font-size: 11px; }

.taskbar { display: flex; height: 6px; flex: none; overflow: hidden; background: linear-gradient(90deg, #10151a, #2a3844 45%, #26323c 75%, #0d1216); border-top: 1px solid #7b868e; }
.orb { margin-left: 12px; }
.bits { margin: 0 72px 0 116px; }
.task { display: flex; justify-content: center; width: 58px; height: 6px; margin-right: 4px; background: linear-gradient(90deg, #b8babc, #5a5d62); }
.task.act { background: linear-gradient(90deg, #e0e0e0, #9a9c9e); }

/* dialog */
.dialog {
  position: absolute;
  top: 76px;
  left: 50%;
  width: 624px;
  margin-left: -312px;
  padding: 0 5px 5px;
  border: 1px solid #dfe5ea;
  border-radius: 7px;
  box-shadow: 0 0 0 1px #151515, 0 4px 16px 4px rgba(0, 0, 0, .75);
  background:
    radial-gradient(60px 22px at 32px 12px, rgba(225, 228, 232, .85), transparent),
    linear-gradient(90deg, #80868f 0, #7c858f 70px, #3c4b5a 190px, #2f3f4e 340px, #35434f 440px, #70808c 540px, #87909a 100%) 0 0 / 100% 27px no-repeat,
    linear-gradient(#80868f 27px, #c5c8cf 160px, #34475a 161px, #34475a 360px, #26313d 410px, #3c5064 520px, #33485a);
}
.dtitle { display: flex; justify-content: space-between; height: 27px; color: #000; }
.dtitle h2 { padding: 5px 0 0 1px; }
.dtitle button { width: 47px; height: 18px; border: 1px solid #e8c8c4; border-top: 0; border-radius: 0 0 5px 5px; box-shadow: 0 0 0 1px #4a2a2a; background: linear-gradient(#d8958b 0, #cb6152 45%, #b22c18 50%, #c8563c); }
.dbody { padding: 15px 16px; border: 1px solid #a9b5bd; background: #404040; color: #dcdcdc; }
fieldset { min-width: 0; margin: 0; padding: 0; border: 1px solid #202020; box-shadow: 1px 1px #525252; }
legend { height: 16px; margin-left: 2px; padding: 0 5px; line-height: 17px; }
.f1, .f2 { display: flex; justify-content: space-between; }
.f1 { padding: 1px 14px 8px 0; }
.f2 { margin-top: 21px; padding: 1px 14px 13px 0; }
.form { display: grid; grid-auto-rows: 30px; align-items: center; column-gap: 6px; }
.form label, .lab { padding-top: 1px; text-align: right; }
.form .dd { width: 100%; }
.left { grid-template-columns: 83px 198px; align-content: start; }
.left.wide { grid-template-columns: 83px 207px; }
.rightcol { grid-template-columns: 83px 173px; }
.form .dim { color: #686868; font-size: 11px; }
.left .num { margin-left: -1px; color: #c4c4c4; }
.open { position: relative; height: 19px; }
.dd.focus { border-color: #1a1a1a; box-shadow: 0 0 0 1px #c48a00; display: block; }
.menu {
  position: absolute;
  z-index: 2;
  top: 19px;
  left: -1px;
  width: 175px;
  padding: 2px;
  list-style: none;
  color: #000;
  border: 1px solid #a0a0a0;
  box-shadow: 3px 3px 4px rgba(0, 0, 0, .6);
  background: linear-gradient(90deg, transparent 28px, #dadada 28px, #dadada 29px, #fff 29px, #fff 30px, transparent 30px) #f1f1f1;
}
.menu li { position: relative; height: 22px; padding-left: 31px; line-height: 20px; border: 1px solid transparent; border-radius: 3px; }
.menu .line { height: 8px; margin-left: 29px; padding: 0; border-radius: 0; background: linear-gradient(transparent 4px, #d8d8d8 4px, #d8d8d8 5px, #fff 5px, #fff 6px, transparent 6px); }
.menu .hover { border-color: #aecff7; background: linear-gradient(rgba(240, 244, 250, .8), rgba(226, 234, 246, .8)); }
.menu .sel::before { content: ""; position: absolute; left: -1px; top: -1px; width: 22px; height: 22px; border: 1px solid #aecff7; border-radius: 3px; background: radial-gradient(circle at 50% 50%, #a8a8e8 0, #3c3c90 3px, #22226a 4px, #e6eefa 4px); }
.time { width: 254px; margin-top: 5px; }
.rate { padding: 9px 0 15px 18px; }
.rate legend { margin-left: -16px; }
.rate label { display: flex; align-items: center; height: 23px; gap: 5px; }
.rate .num { margin-left: 8px; color: #c4c4c4; }
.rate a.num { color: #c48a00; border-bottom: 1px dotted #c48a00; line-height: 14px; }
input[type=radio] { appearance: none; width: 12px; height: 12px; border: 1px solid #1c1c1c; border-radius: 50%; box-shadow: 0 0 0 1px #4d4d4d; background: #444; }
input[type=radio]:checked { background: radial-gradient(circle, #d0d0d0 2px, #444 3px); }
.range { display: flex; align-items: center; gap: 8px; margin-top: 11px; }
.times { display: grid; grid-template-columns: 90px 58px; column-gap: 4px; grid-auto-rows: 20px; align-items: center; }
.times span:nth-child(odd) { text-align: right; }
.times .num { color: #c4c4c4; }
.range button, .actions button { height: 18px; border: 1px solid #1a1a1a; box-shadow: 0 0 0 1px #4e4e4e; background: linear-gradient(#535353, #3c3c3c); }
.range button { width: 66px; }
.f3 { margin-top: 21px; padding: 6px 0 15px 91px; }
.f3 label { display: flex; align-items: center; gap: 5px; height: 18px; color: #686868; }
.f3 legend { margin-left: -89px; }
.actions { display: flex; justify-content: flex-end; gap: 11px; margin-top: 21px; padding-bottom: 1px; }
.actions button { width: 88px; height: 19px; }
.actions .ok { width: 90px; height: 20px; border-width: 2px; box-shadow: none; }

/* pointer arrows over the window */
.marks { position: absolute; left: 0; top: 0; pointer-events: none; z-index: 5; }
```
